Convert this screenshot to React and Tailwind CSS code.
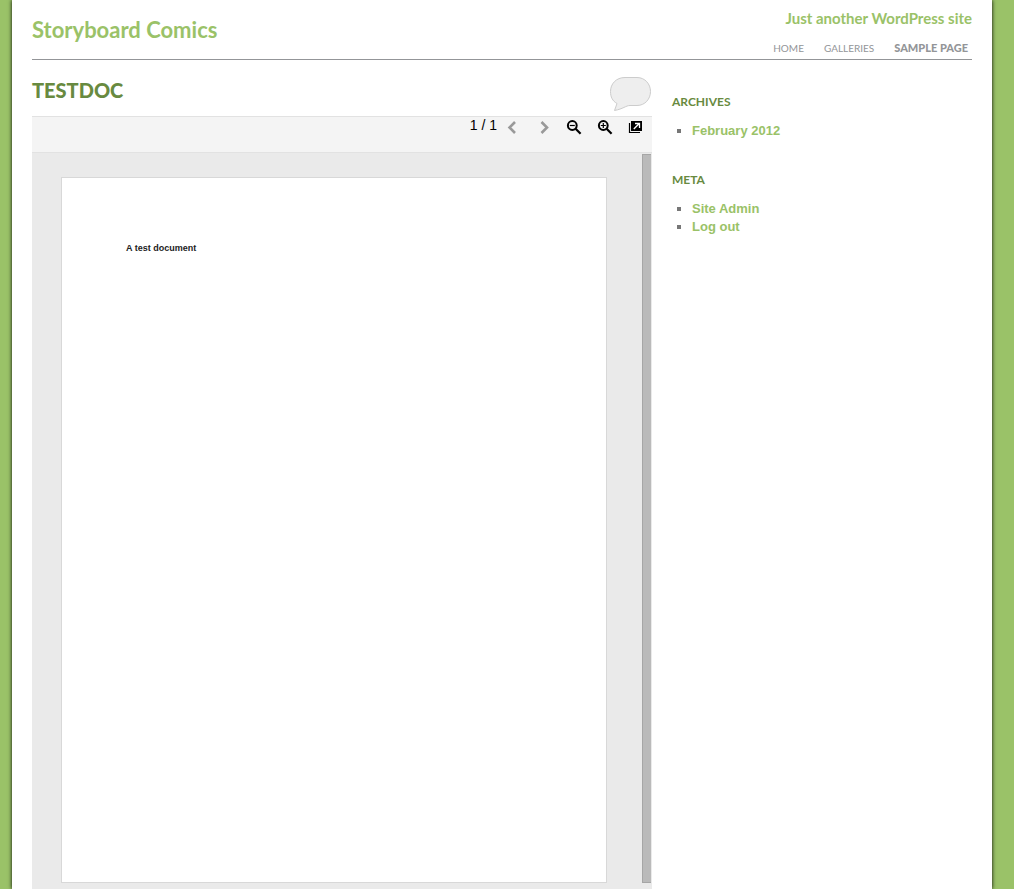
import React from "react";

const navItems = [
  { label: "HOME", href: "#home", style: "text-[10px] font-normal" },
  { label: "GALLERIES", href: "#galleries", style: "text-[10px] font-normal" },
  { label: "SAMPLE PAGE", href: "#sample", style: "text-[11px] font-black" },
];

const widgets = [
  { title: "ARCHIVES", links: ["February 2012"] },
  { title: "META", links: ["Site Admin", "Log out"] },
];

function Chevron({ d }) {
  return (
    <svg viewBox="0 0 16 16" className="size-4" fill="none" stroke="#999999" strokeWidth="2.6">
      <path d={d} />
    </svg>
  );
}

function Magnifier({ plus }) {
  return (
    <svg viewBox="0 0 16 16" className="size-4" fill="none" stroke="#000000">
      <circle cx="6.3" cy="5.5" r="4.4" strokeWidth="2" />
      <path d="M9.600 8.800l5 5" strokeWidth="2.2" />
      <path d={plus ? "M3.800 5.500h5M6.300 3v5" : "M3.800 5.500h5"} strokeWidth="1.2" />
    </svg>
  );
}

function PopOut() {
  return (
    <svg viewBox="0 0 16 16" className="size-4" fill="none">
      <path d="M3 1h11v10H3z" fill="#000000" />
      <path d="M1.500 3v9.500H12" stroke="#000000" strokeWidth="1.2" />
      <path d="M5.800 9l5-5M7 3.500h4.500V8" stroke="#ffffff" strokeWidth="1.3" />
    </svg>
  );
}

function Header() {
  return (
    <header className="flex h-15 items-start justify-between border-b border-[#939598]">
      <h1 className="pt-3 text-[22px] leading-9 font-bold">
        <a href="#home" className="text-[#9ac268]">Storyboard Comics</a>
      </h1>
      <div className="flex flex-col items-end pt-1.5">
        <p className="text-[15px] leading-6 font-bold text-[#9ac268]">Just another WordPress site</p>
        <nav className="flex items-baseline gap-5 pt-2 pr-1 leading-5 text-[#939598]">
          {navItems.map((item) => (
            <a key={item.label} href={item.href} className={item.style}>{item.label}</a>
          ))}
        </nav>
      </div>
    </header>
  );
}

function Viewer() {
  return (
    <section className="bg-[#eaeaea]">
      <div className="flex h-[37px] items-start justify-end border-y border-[#e2e2e2] bg-[#f4f4f4] pr-2 font-['Liberation_Sans',sans-serif]">
        <span className="text-sm leading-4 text-black">1 / 1</span>
        <div className="flex gap-[15px] pt-[3px] pl-[7px]">
          <button type="button" aria-label="Previous page"><Chevron d="M11 2L5.500 7.500l5.500 5.500" /></button>
          <button type="button" aria-label="Next page"><Chevron d="M6.500 2L12 7.500l-5.500 5.500" /></button>
          <button type="button" aria-label="Zoom out"><Magnifier /></button>
          <button type="button" aria-label="Zoom in"><Magnifier plus /></button>
          <button type="button" aria-label="Open in new window"><PopOut /></button>
        </div>
      </div>
      <div className="flex pr-px pb-1.5 pl-[29px]">
        <div className="mt-6 h-[706px] flex-1 border border-[#d8d8d8] bg-white px-16 pt-16">
          <p className="font-['Liberation_Sans',sans-serif] text-[9px] leading-3 font-bold text-[#222222]">A test document</p>
        </div>
        <div className="mt-px ml-[35px] w-[9px] border border-r-0 border-[#a6a6a6] bg-[#bababa]" />
      </div>
    </section>
  );
}

export default function App() {
  return (
    <div className="min-h-screen bg-[#9ac268] pr-[22px] pl-3 font-[Lato,sans-serif]">
      <div className="min-h-screen bg-white px-5 shadow-[0_0_4px_#000000]">
        <Header />
        <div className="grid grid-cols-[minmax(0,1fr)_300px] gap-5">
          <main>
            <div className="flex h-14 items-start justify-between">
              <h2 className="pt-3 text-[20px] leading-9 font-black text-[#688a40]">TESTDOC</h2>
              <a href="#comments" aria-label="Comments" className="pt-4">
                <svg viewBox="0 0 43 36" className="h-9 w-[43px]" fill="#eeeeee" stroke="#cccccc">
                  <path d="M16 1.500H28C36 1.500 41.500 8 41.500 15.500C41.500 23 36 29.500 28 29.500H21C17 29.500 14 33 5.500 34.500L8 27.500C3.500 25 1.500 21 1.500 15.500C1.500 8 7 1.500 16 1.500Z" />
                </svg>
              </a>
            </div>
            <Viewer />
          </main>
          <aside className="pt-8">
            {widgets.map((widget) => (
              <section key={widget.title} className="pb-[30px]">
                <h3 className="text-xs leading-5 font-bold text-[#688a40]">{widget.title}</h3>
                <ul className="list-[square] pt-2.5 pl-5 font-['Liberation_Sans',sans-serif] text-[13px] leading-[18px] font-bold text-[#777777]">
                  {widget.links.map((link) => (
                    <li key={link}><a href="#link" className="text-[#9ac268]">{link}</a></li>
                  ))}
                </ul>
              </section>
            ))}
          </aside>
        </div>
      </div>
    </div>
  );
}
